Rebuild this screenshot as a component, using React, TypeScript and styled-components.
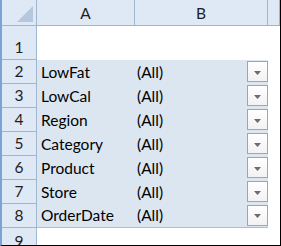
import * as React from 'react';
import styled, { createGlobalStyle } from 'styled-components';

const fields = ['LowFat', 'LowCal', 'Region', 'Category', 'Product', 'Store', 'OrderDate'];

const Global = createGlobalStyle`
    html, body {
        margin: 0;
        padding: 0;
        background: #ffffff;
    }
`;

const Sheet = styled.div`
    width: 281px;
    height: 246px;
    box-sizing: border-box;
    border-left: 2px solid #7aa3d6;
    border-right: 1px solid #000000;
    border-bottom: 1px solid #000000;
    display: grid;
    grid-template-columns: 35px 98px 133px 12px;
    grid-template-rows: 26px 34px repeat(7, 24px) 17px;
    overflow: hidden;
    font-family: Lato, "Liberation Sans", sans-serif;
    font-size: 15.5px;
    color: #000000;
`;

const Header = styled.div`
    box-sizing: border-box;
    background: #dfe8f5;
    border-right: 1px solid #9eb6ce;
    border-bottom: 1px solid #9eb6ce;
    display: flex;
    align-items: center;
    justify-content: center;
    color: #1e1e1e;
`;

const Corner = styled(Header)`
    align-items: flex-end;
    justify-content: flex-end;
    padding: 0 3px 3px 0;
`;

const ColHeader = styled(Header)`
    padding-top: 1px;
`;

// the last row is cut by the window edge: its number shows only its top
const RowHeader = styled(Header)<{ $cut?: boolean }>`
    align-items: ${(p) => (p.$cut ? 'flex-start' : 'flex-end')};
    padding: ${(p) => (p.$cut ? '4px 0 0' : '0 0 3px')};
    border-bottom: ${(p) => (p.$cut ? 'none' : '1px solid #9eb6ce')};
    overflow: hidden;
    line-height: 18px;
`;

const Cell = styled.div<{ $filter?: boolean; $last?: boolean }>`
    box-sizing: border-box;
    background: ${(p) => (p.$filter ? '#dce6f1' : '#ffffff')};
    border-bottom: ${(p) => (p.$last ? '1px solid #a6bedb' : 'none')};
    display: flex;
    align-items: flex-end;
    justify-content: space-between;
    padding: 0 0 3px 4px;
    white-space: nowrap;
`;

const ValueCell = styled(Cell)`
    align-items: center;
    padding: 0 0 0 2px;
`;

const Value = styled.span`
    align-self: flex-end;
    padding-bottom: 3px;
`;

const DropButton = styled.div`
    width: 21px;
    height: 21px;
    box-sizing: border-box;
    margin: 0 0 1px 0;
    border: 1px solid #a5a5a5;
    background: linear-gradient(#ffffff, #f2f2f2);
    display: flex;
    align-items: center;
    justify-content: center;
    padding-top: 2px;
`;

const Arrow = () => (
    <svg width="7" height="4" viewBox="0 0 7 4">
        <path d="M0 0 H7 L3.5 4 Z" fill="#6b6b6b" />
    </svg>
);

const CornerMark = () => (
    <svg width="16" height="16" viewBox="0 0 16 16">
        <path d="M16 0 V16 H0 Z" fill="#b4c7de" />
    </svg>
);

const App = () => (
    <>
        <Global />
        <Sheet>
            <Corner><CornerMark /></Corner>
            <ColHeader>A</ColHeader>
            <ColHeader>B</ColHeader>
            <ColHeader />

            <RowHeader>1</RowHeader>
            <Cell />
            <Cell />
            <Cell />

            {fields.map((f, i) => (
                <React.Fragment key={f}>
                    <RowHeader>{i + 2}</RowHeader>
                    <Cell $filter $last={i === fields.length - 1}>{f}</Cell>
                    <ValueCell $filter $last={i === fields.length - 1}>
                        <Value>(All)</Value>
                        <DropButton><Arrow /></DropButton>
                    </ValueCell>
                    <Cell />
                </React.Fragment>
            ))}

            <RowHeader $cut>9</RowHeader>
            <Cell />
            <Cell />
            <Cell />
        </Sheet>
    </>
);

export default App;
